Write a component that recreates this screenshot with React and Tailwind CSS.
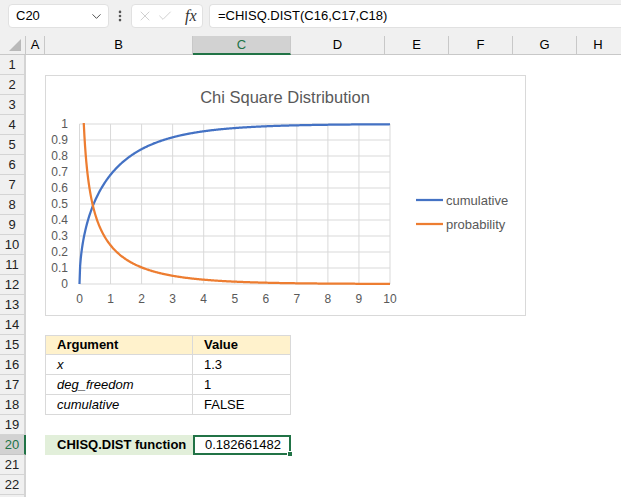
import { ChevronDown, X, Check, EllipsisVertical } from 'lucide-react';

const FONT = { fontFamily: '"Liberation Sans", Arial, sans-serif' };

// column widths after the row header: A, B, C, D, E, F, G, H
const COLS = [
    { id: 'A', w: 'w-[19px]' },
    { id: 'B', w: 'w-[148px]' },
    { id: 'C', w: 'w-[98px]' },
    { id: 'D', w: 'w-[94px]' },
    { id: 'E', w: 'w-[64px]' },
    { id: 'F', w: 'w-[64px]' },
    { id: 'G', w: 'w-[64px]' },
];

function erf(x) {
    const t = 1 / (1 + 0.3275911 * x);
    const y = 1 - (((((1.061405429 * t - 1.453152027) * t) + 1.421413741) * t - 0.284496736) * t + 0.254829592) * t * Math.exp(-x * x);
    return y;
}
const cdf = (x) => erf(Math.sqrt(x / 2));
const pdf = (x) => Math.exp(-x / 2) / Math.sqrt(2 * Math.PI * x);

const X0 = 33.5;
const XS = 31.05;
const Y0 = 208;
const YS = 160;

function makePath(fn, start) {
    const pts = [];
    for (let x = start; x <= 10.0001; x += 0.02) {
        pts.push(`${(X0 + x * XS).toFixed(2)},${(Y0 - fn(x) * YS).toFixed(2)}`);
    }
    return 'M' + pts.join(' L');
}

function Chart() {
    const xs = Array.from({ length: 11 }, (_, i) => i);
    return (
        <div className="absolute left-[45px] top-[20px] h-[241px] w-[481px] border border-[#d9d9d9] bg-white">
            <svg width="479" height="239" style={FONT}>
                <defs>
                    <clipPath id="plot">
                        <rect x={X0 - 3} y={Y0 - YS - 1} width={10 * XS + 6} height={YS + 4} />
                    </clipPath>
                </defs>
                <text x="239" y="27" textAnchor="middle" fontSize="16.5" fill="#595959">Chi Square Distribution</text>
                {xs.map((i) => (
                    <line key={'v' + i} x1={X0 + i * XS} x2={X0 + i * XS} y1={Y0 - YS} y2={Y0} stroke="#d9d9d9" strokeWidth="1" />
                ))}
                {xs.map((j) => (
                    <line key={'h' + j} x1={X0} x2={X0 + 10 * XS} y1={Y0 - j * 16} y2={Y0 - j * 16} stroke="#d9d9d9" strokeWidth="1" />
                ))}
                {xs.map((j) => (
                    <text key={'yl' + j} x="22" y={Y0 - j * 16 + 4} textAnchor="end" fontSize="12" fill="#595959">
                        {j === 0 ? '0' : j === 10 ? '1' : `0.${j}`}
                    </text>
                ))}
                {xs.map((i) => (
                    <text key={'xl' + i} x={X0 + i * XS} y="227" textAnchor="middle" fontSize="12" fill="#595959">{i}</text>
                ))}
                <g clipPath="url(#plot)" fill="none" strokeWidth="2.25" strokeLinejoin="round">
                    <path d={makePath(cdf, 0)} stroke="#4472c4" />
                    <path d={makePath(pdf, 0.1)} stroke="#ed7d31" />
                </g>
                <line x1="370" x2="397" y1="124" y2="124" stroke="#4472c4" strokeWidth="2.25" />
                <text x="400" y="128.5" fontSize="13" fill="#595959">cumulative</text>
                <line x1="370" x2="397" y1="148" y2="148" stroke="#ed7d31" strokeWidth="2.25" />
                <text x="400" y="152.5" fontSize="13" fill="#595959">probability</text>
            </svg>
        </div>
    );
}

const CELLS = {
    15: { b: 'Argument', c: 'Value', kind: 'head' },
    16: { b: 'x', c: '1.3', kind: 'arg' },
    17: { b: 'deg_freedom', c: '1', kind: 'arg' },
    18: { b: 'cumulative', c: 'FALSE', kind: 'arg', last: true },
    20: { b: 'CHISQ.DIST function', c: '0.182661482', kind: 'result' },
};

function Row({ n }) {
    const cell = CELLS[n];
    const active = n === 20;
    let bCell = <div className="w-[148px] shrink-0" />;
    let cCell = <div className="w-[98px] shrink-0" />;
    if (cell && cell.kind !== 'result') {
        const bg = cell.kind === 'head' ? 'bg-[#fff2cc] font-bold' : 'bg-white';
        const top = cell.kind === 'head' ? 'border-t' : '';
        bCell = (
            <div className={`flex w-[148px] shrink-0 items-center border-b border-l border-r border-[#d9d9d9] pl-[11px] ${top} ${bg} ${cell.kind === 'arg' ? 'italic' : ''}`}>
                {cell.b}
            </div>
        );
        cCell = (
            <div className={`flex w-[98px] shrink-0 items-center border-b border-r border-[#d9d9d9] pl-[11px] ${top} ${bg}`}>
                {cell.c}
            </div>
        );
    }
    if (cell && cell.kind === 'result') {
        bCell = (
            <div className="flex w-[148px] shrink-0 items-center bg-[#e2efda] pl-[12px] font-bold">{cell.b}</div>
        );
        cCell = (
            <div className="relative flex w-[98px] shrink-0 items-center border-2 border-[#217346] pl-[10px]">
                {cell.c}
                <div className="absolute -bottom-[4px] -right-[4px] h-[6px] w-[6px] border border-white bg-[#217346]" />
            </div>
        );
    }
    return (
        <div className="flex h-[20px] text-[13px] text-black">
            <div
                className={`flex w-[26px] shrink-0 items-center justify-center border-b border-r-2 text-[13px] ${
                    active ? 'border-b-[#c6c6c6] border-r-[#217346] bg-[#d2d2d2] text-[#217346]' : 'border-b-[#d4d4d4] border-r-[#d4d4d4] bg-[#f0f0f0] text-[#222]'
                }`}
            >
                {n <= 22 ? n : ''}
            </div>
            <div className="w-[19px] shrink-0" />
            {bCell}
            {cCell}
            <div className="flex-1" />
        </div>
    );
}

export default function App() {
    const rows = Array.from({ length: 23 }, (_, i) => i + 1);
    return (
        <div className="h-[497px] w-[621px] overflow-hidden bg-white" style={FONT}>
            {/* formula bar */}
            <div className="flex h-[36px] items-start gap-0 bg-[#f0f0f0] pt-[4px] text-[13px] text-black">
                <div className="ml-[8px] flex h-[24px] w-[101px] items-center justify-between rounded-[4px] border border-[#e1e1e1] bg-white pl-[7px] pr-[4px]">
                    <span>C20</span>
                    <ChevronDown size={15} strokeWidth={1.5} className="text-[#444]" />
                </div>
                <div className="flex h-[24px] w-[22px] items-center justify-center">
                    <EllipsisVertical size={14} strokeWidth={2.5} className="text-[#555]" />
                </div>
                <div className="flex h-[24px] w-[72px] items-center gap-[4px] rounded-[4px] border border-[#e1e1e1] bg-white pl-[5px]">
                    <X size={16} strokeWidth={1} className="text-[#b8b8b8]" />
                    <Check size={16} strokeWidth={1} className="text-[#b8b8b8]" />
                    <span className="ml-[8px] text-[16px] italic text-[#333]" style={{ fontFamily: '"Liberation Serif", serif' }}>fx</span>
                </div>
                <div className="ml-[6px] flex h-[24px] flex-1 items-center rounded-l-[4px] border border-r-0 border-[#e1e1e1] bg-white pl-[8px]">
                    =CHISQ.DIST(C16,C17,C18)
                </div>
            </div>
            {/* column headers */}
            <div className="flex h-[19px] bg-[#f0f0f0] text-[13px] text-black">
                <div className="relative w-[26px] shrink-0 border-b border-r border-[#c8c8c8]">
                    <div className="absolute bottom-[3px] right-[4px] h-0 w-0 border-b-[12px] border-l-[12px] border-b-[#b9b9b9] border-l-transparent" />
                </div>
                {COLS.map((c) => (
                    <div
                        key={c.id}
                        className={`flex ${c.w} shrink-0 items-center justify-center border-r ${
                            c.id === 'C' ? 'border-b-2 border-b-[#217346] border-r-[#c8c8c8] bg-[#d2d2d2] text-[#217346]' : 'border-b border-b-[#c8c8c8] border-r-[#c8c8c8]'
                        }`}
                    >
                        {c.id}
                    </div>
                ))}
                <div className="flex flex-1 items-center justify-center border-b border-[#c8c8c8] pr-[2px]">H</div>
            </div>
            {/* grid */}
            <div className="relative">
                {rows.map((n) => (
                    <Row key={n} n={n} />
                ))}
                <Chart />
            </div>
        </div>
    );
}
